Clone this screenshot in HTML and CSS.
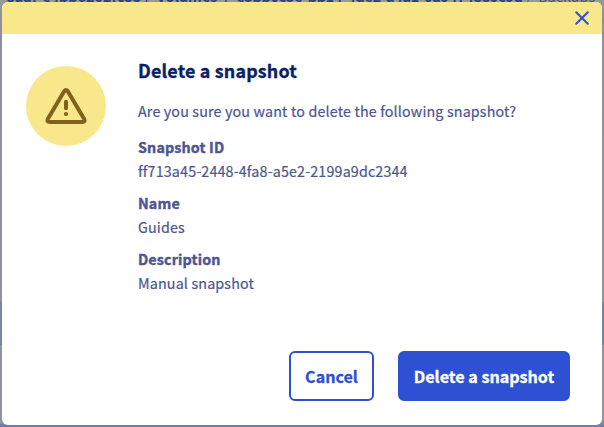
FILE: index.html
```html
<!DOCTYPE html>
<html lang="en">
<head>
<meta charset="utf-8">
<title>Delete a snapshot</title>
<link rel="stylesheet" href="styles.css">
</head>
<body>
<nav class="breadcrumb">-8aaf-e4bb6202fc33 / &nbsp;Volumes &nbsp;/ &nbsp;<span class="volume">e5bb0c5e-bb14-4de2-a4a1-0a9474889c9d</span> <span class="current">/ &nbsp;Backups</span></nav>
<div class="edge-band"></div>
<main class="modal" role="dialog" aria-labelledby="title">
  <header class="modal-header">
    <button class="close" aria-label="Close">
      <svg width="16" height="16" viewBox="0 0 16 16"><path d="M2.2 2.2 13.8 13.8M13.8 2.2 2.2 13.8"/></svg>
    </button>
  </header>
  <div class="modal-body">
    <div class="badge">
      <svg width="42" height="38" viewBox="0 0 42 38"><path class="outline" d="M19.2 4.2Q21 1.800 22.8 4.2L39.2 32Q40.400 34.900 37.400 34.900H4.600Q1.600 34.900 2.800 32Z"/><path class="mark" d="M21 14.800V21.200"/><circle cx="21" cy="27" r="2.100"/></svg>
    </div>
    <div class="content">
      <h1 id="title">Delete a snapshot</h1>
      <p>Are you sure you want to delete the following snapshot?</p>
      <dl>
        <dt>Snapshot ID</dt><dd>ff713a45-2448-4fa8-a5e2-2199a9dc2344</dd>
        <dt>Name</dt><dd>Guides</dd>
        <dt>Description</dt><dd>Manual snapshot</dd>
      </dl>
    </div>
  </div>
  <footer class="actions">
    <button class="btn cancel">Cancel</button>
    <button class="btn primary">Delete a snapshot</button>
  </footer>
</main>
</body>
</html>
```
FILE: styles.css
```css
* { box-sizing: border-box; }
body {
  margin: 0;
  height: 427px;
  padding: 2px;
  overflow: hidden;
  position: relative;
  background: linear-gradient(#999999, #8e8ea3 20px, #9292a6 422px, #6c7ba3 426px);
  font-family: "Noto Sans CJK SC", "Noto Sans", sans-serif;
  color: #4d5592;
}
.breadcrumb {
  position: absolute;
  left: 1px;
  top: -14px;
  line-height: 20px;
  font-size: 14.3px;
  letter-spacing: 0.05px;
  font-weight: 700;
  white-space: nowrap;
  color: #2b3f87;
}
.volume { letter-spacing: -0.2px; }
.current { color: #4d5070; font-weight: 400; }
.edge-band {
  position: absolute;
  left: 0;
  top: 302px;
  width: 604px;
  height: 43px;
  background: #7189a5;
}
.modal {
  position: relative;
  width: 600px;
  height: 423px;
  border-radius: 6px;
  overflow: hidden;
  background: #fff;
  display: flex;
  flex-direction: column;
}
.modal-header {
  height: 32px;
  flex: none;
  padding-right: 12px;
  background: #f8e88b;
  display: flex;
  align-items: center;
  justify-content: flex-end;
}
.close {
  width: 16px;
  height: 16px;
  padding: 0;
  border: 0;
  background: none;
}
.close svg { display: block; }
.close path { stroke: #2e50d2; stroke-width: 2; stroke-linecap: round; }
.modal-body {
  display: flex;
  gap: 32px;
  padding: 24px 24px 0;
}
.badge {
  width: 80px;
  height: 80px;
  margin-top: 8px;
  border-radius: 50%;
  background: #f8e88b;
  display: flex;
  align-items: center;
  justify-content: center;
}
.badge .outline { fill: none; stroke: #80611e; stroke-width: 4; stroke-linejoin: round; }
.badge .mark { stroke: #80611e; stroke-width: 4; stroke-linecap: round; }
.badge circle { fill: #80611e; }
.content { margin-top: -1px; }
h1 {
  margin: 0 0 16px;
  font-size: 17.9px;
  line-height: 26px;
  letter-spacing: 0.17px;
  -webkit-text-stroke: 0.35px;
  color: #0b1f66;
}
p, dl {
  margin: 0;
  font-size: 14.3px;
  line-height: 24px;
  letter-spacing: 0.15px;
  -webkit-text-stroke: 0.2px;
}
p { margin-bottom: 12px; }
dt { font-weight: 700; -webkit-text-stroke: 0.4px; }
dd { margin: 0 0 8px; }
.actions {
  margin: auto 32px 24px;
  display: flex;
  justify-content: flex-end;
  gap: 24px;
}
.btn {
  height: 50px;
  padding: 0;
  border: 2px solid #2e50d2;
  border-radius: 6px;
  font-family: inherit;
  font-size: 16.1px;
  font-weight: 700;
  -webkit-text-stroke: 0.3px;
}
.cancel { width: 85px; background: #fff; color: #2e50d2; }
.primary { width: 172px; background: #2e50d2; color: #fff; }
```
